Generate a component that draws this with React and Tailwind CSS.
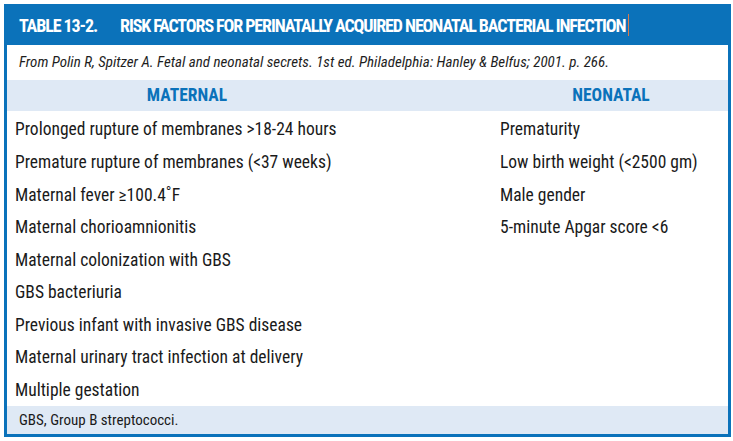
const maternal = [
  "Prolonged rupture of membranes >18-24 hours",
  "Premature rupture of membranes (<37 weeks)",
  "Maternal fever \u2265100.4\u02DAF",
  "Maternal chorioamnionitis",
  "Maternal colonization with GBS",
  "GBS bacteriuria",
  "Previous infant with invasive GBS disease",
  "Maternal urinary tract infection at delivery",
  "Multiple gestation",
];

const neonatal = [
  "Prematurity",
  "Low birth weight (<2500 gm)",
  "Male gender",
  "5-minute Apgar score <6",
];

export default function App() {
  const rows = maternal.map((m, i) => [m, neonatal[i] || ""]);

  return (
    <div
      className="w-[733px] h-[441px] bg-white p-[4px] pr-[2px]"
      style={{ fontFamily: '"Roboto Condensed", Roboto, "Liberation Sans", Arial, sans-serif' }}
    >
      <div className="h-[433px] border-[3px] border-t-0 border-[#0b72ba] flex flex-col">
        {/* title bar */}
        <div className="h-[42px] bg-[#0b72ba] flex items-center pl-[12px] pt-[1px] text-white font-bold text-[18px] tracking-[-1.1px] whitespace-nowrap">
          <span>TABLE 13-2.</span>
          <span className="ml-[23px]">RISK FACTORS FOR PERINATALLY ACQUIRED NEONATAL BACTERIAL INFECTION</span>
          <span className="w-px h-[22px] bg-[#d97a4a] ml-[2px]"></span>
        </div>

        {/* source */}
        <div className="h-[35px] flex items-center pl-[12px] text-[15px] italic text-[#1e1e1e]">
          From Polin R, Spitzer A. Fetal and neonatal secrets. 1st ed. Philadelphia: Hanley &amp; Belfus; 2001. p. 266.
        </div>

        {/* column heads */}
        <div className="h-[32px] bg-[#dfe9f5] grid grid-cols-[483px_1fr] items-center text-[#0b72ba] font-bold text-[17.5px]">
          <div className="w-[360px] text-center">MATERNAL</div>
          <div className="text-center pl-[4px]">NEONATAL</div>
        </div>

        {/* body */}
        <div className="flex-1 flex flex-col pt-[2px] text-[17.5px] text-[#1a1a1a]">
          {rows.map(([m, n], i) => (
            <div key={i} className="h-[32.6px] grid grid-cols-[483px_1fr] items-center">
              <div className="pl-[8px]">{m}</div>
              <div className="pl-[10px]">{n}</div>
            </div>
          ))}
        </div>

        {/* footnote */}
        <div className="h-[28px] bg-[#dfe9f5] flex items-center pl-[12px] text-[15px] text-[#1a1a1a]">
          GBS, Group B streptococci.
        </div>
      </div>
    </div>
  );
}
